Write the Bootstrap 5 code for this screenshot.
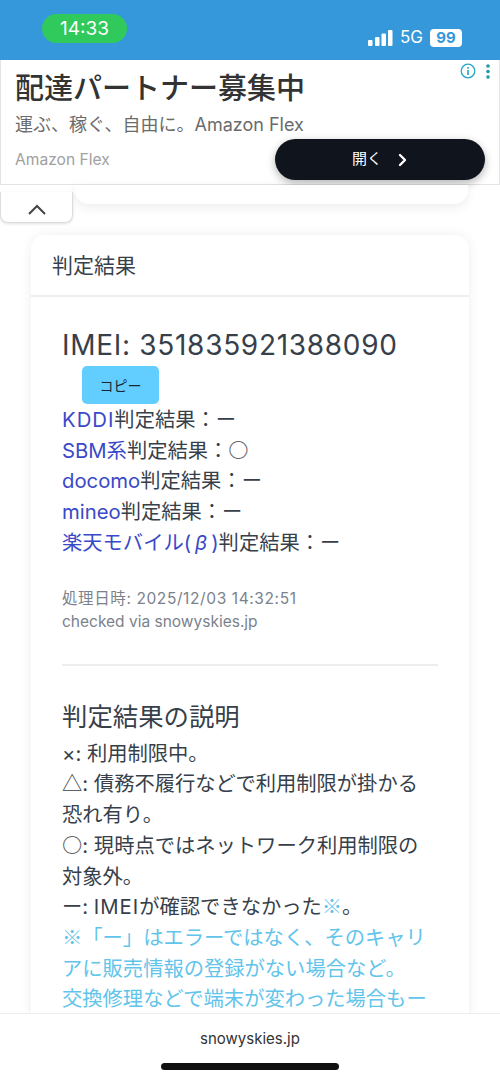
<!DOCTYPE html>
<html lang="ja">
<head>
    <meta charset="UTF-8">
    <meta name="viewport" content="width=device-width, initial-scale=1.0">
    <title>判定結果</title>
    <link href="https://cdn.jsdelivr.net/npm/bootstrap@5.3.3/dist/css/bootstrap.min.css" rel="stylesheet">
    <style>
        html, body { height: 1080px; overflow: hidden; }
        body { background: #fff; color: #373f4a; font-family: Inter, "Noto Sans CJK JP", sans-serif; position: relative; }
        .status-strip { height: 60px; background: #3498db; padding: 14px 38px 0 42px; }
        .clock-pill { width: 85px; height: 29px; border-radius: 15px; background: #30c95c; color: #fff; font-size: 19px; line-height: 29px; text-align: center; }
        .status-right { color: #fff; font-size: 17px; margin-top: 11px; gap: 7px; }
        .batt-box { width: 32px; height: 18px; border-radius: 4px; background: #fff; color: #3498db; font-size: 15px; font-weight: 700; line-height: 18px; text-align: center; }
        .ad-box { height: 125px; background: #fff; border: 1px solid #e4e4e4; border-top: 0; padding: 9px 14px 0; position: relative; }
        .ad-title { font-size: 29px; line-height: 40px; color: #333; font-weight: 500; }
        .ad-sub { font-size: 18px; line-height: 26px; color: #6b6b6b; margin-top: 3px; }
        .ad-brand { font-size: 15.6px; line-height: 20px; color: #a0a0a0; margin-top: 12px; }
        .ad-open { position: absolute; left: 274px; top: 79px; width: 210px; height: 41px; border-radius: 21px; background: #10141c; color: #fff; font-size: 15px; box-shadow: 0 3px 8px rgba(0,0,0,.3); gap: 16px; }
        .ad-marks { position: absolute; right: 9px; top: 3px; gap: 10px; }
        .scroll-area { position: relative; height: 50px; }
        .prev-card { position: absolute; left: 75px; right: 32px; top: 0; height: 19px; background: #fff; border-radius: 0 0 14px 14px; box-shadow: 0 3px 12px rgba(0,0,0,.08); }
        .fold-tab { position: absolute; left: 0; top: 7px; width: 73px; height: 31px; background: #fff; border: 1px solid #ddd; border-top: 0; border-radius: 0 0 8px 8px; text-align: center; box-shadow: 0 1px 3px rgba(0,0,0,.12); }
        .result-card { margin: 0 31px 0 31px; border: 0; border-radius: 14px; box-shadow: 0 0 12px rgba(0,0,0,.07); }
        .result-card .card-header { height: 62px; background: #fff; border-bottom: 2px solid #eee; font-size: 21px; line-height: 62px; padding: 0 21px; border-radius: 14px 14px 0 0; color: #373f4a; }
        .result-card .card-body { padding: 30px 31px; }
        .imei-line { font-size: 28px; line-height: 36px; margin: 0; letter-spacing: .7px; }
        .btn-copy { display: block; width: 77px; height: 38px; margin: 3px 0 0 20px; padding: 0; background: #62cdff; border: 0; border-radius: 5px; color: #1a2733; font-size: 14px; }
        .carrier-list { font-size: 20.3px; line-height: 30.7px; margin-top: 1px; }
        .carrier-list a { color: #3949c8; text-decoration: none; }
        .wide-latin { letter-spacing: 1px; }
        .beta-mark { font-style: italic; padding: 0 4px; }
        .thin-circle { color: #666; font-weight: 300; }
        .meta-text { font-size: 15.5px; line-height: 23.6px; color: #7b828c; margin-top: 28px; }
        .meta-date { letter-spacing: .6px; }
        .split { border-top: 2px solid #eee; margin: 30px 0 32px; opacity: 1; }
        .help-title { font-size: 25.4px; line-height: 38px; margin: 0; font-weight: 400; }
        .help-text { font-size: 20.3px; line-height: 30.7px; margin-top: 3px; }
        .note-blue { color: #62c4ea; }
        .cjk-mark { font-family: "Noto Sans CJK JP", sans-serif; line-height: 1; }
        .bottom-bar { position: absolute; left: 0; right: 0; top: 1013px; height: 67px; background: rgba(255,255,255,.97); border-top: 1px solid #eee; text-align: center; font-size: 15px; color: #333; padding-top: 14px; }
        .home-bar { position: absolute; left: 161px; top: 49px; width: 178px; height: 7px; border-radius: 4px; background: #111; }
    </style>
</head>
<body>
    <div class="status-strip d-flex justify-content-between align-items-start">
        <div class="clock-pill">14:33</div>
        <div class="status-right d-flex align-items-center">
            <svg width="25" height="16" viewBox="0 0 25 16"><rect x="0" y="10" width="4.5" height="6" rx="1" fill="#fff"/><rect x="7" y="7" width="4.5" height="9" rx="1" fill="#fff"/><rect x="13.5" y="3.5" width="4.5" height="12.500" rx="1" fill="#fff"/><rect x="20" y="0" width="4.500" height="16" rx="1" fill="#fff"/></svg>
            <span>5G</span>
            <span class="batt-box">99</span>
        </div>
    </div>

    <div class="ad-box">
        <div class="ad-title">配達パートナー募集中</div>
        <div class="ad-sub">運ぶ、稼ぐ、自由に。Amazon Flex</div>
        <div class="ad-brand">Amazon Flex</div>
        <div class="ad-open d-flex align-items-center justify-content-center">
            <span>開く</span>
            <svg width="10" height="14" viewBox="0 0 10 14"><path d="M2 2l5 5-5 5" fill="none" stroke="#fff" stroke-width="2.400" stroke-linecap="round" stroke-linejoin="round"/></svg>
        </div>
        <div class="ad-marks d-flex align-items-center">
            <svg width="16" height="16" viewBox="0 0 16 16"><circle cx="8" cy="8" r="6.800" fill="none" stroke="#25a5c4" stroke-width="1.300"/><rect x="7.200" y="7" width="1.600" height="5" fill="#25a5c4"/><rect x="7.200" y="4" width="1.600" height="1.700" fill="#25a5c4"/></svg>
            <svg width="4" height="15" viewBox="0 0 4 15"><circle cx="2" cy="2" r="1.800" fill="#1f9aa8"/><circle cx="2" cy="7.500" r="1.800" fill="#1f9aa8"/><circle cx="2" cy="13" r="1.800" fill="#1f9aa8"/></svg>
        </div>
    </div>

    <div class="scroll-area">
        <div class="prev-card"></div>
        <div class="fold-tab">
            <svg width="20" height="12" viewBox="0 0 20 12" class="mt-2"><path d="M2 10l8-8 8 8" fill="none" stroke="#444" stroke-width="2"/></svg>
        </div>
    </div>

    <div class="card result-card">
        <div class="card-header">判定結果</div>
        <div class="card-body">
            <p class="imei-line">IMEI: 351835921388090</p>
            <button class="btn btn-copy" type="button">コピー</button>
            <div class="carrier-list">
                <div><a href="#" class="wide-latin">KDDI</a>判定結果：ー</div>
                <div><a href="#">SBM系</a>判定結果：<span class="thin-circle cjk-mark">〇</span></div>
                <div><a href="#">docomo</a>判定結果：ー</div>
                <div><a href="#">mineo</a>判定結果：ー</div>
                <div><a href="#">楽天モバイル(<span class="beta-mark">β</span>)</a>判定結果：ー</div>
            </div>
            <div class="meta-text"><span class="meta-date">処理日時: 2025/12/03 14:32:51</span><br>checked via snowyskies.jp</div>
            <hr class="split">
            <h5 class="help-title">判定結果の説明</h5>
            <div class="help-text">
                ×: 利用制限中。<br>
                <span class="cjk-mark">△</span>: 債務不履行などで利用制限が掛かる<br>恐れ有り。<br>
                <span class="thin-circle cjk-mark">〇</span>: 現時点ではネットワーク利用制限の<br>対象外。<br>
                ー: <span class="wide-latin">IMEI</span>が確認できなかった<span class="note-blue cjk-mark">※</span>。<br>
                <span class="note-blue"><span class="cjk-mark">※</span>「ー」はエラーではなく、そのキャリ<br>アに販売情報の登録がない場合など。<br>交換修理などで端末が変わった場合もー</span>
            </div>
        </div>
    </div>

    <div class="bottom-bar">
        snowyskies.jp
        <div class="home-bar"></div>
    </div>

    <script src="https://cdn.jsdelivr.net/npm/bootstrap@5.3.3/dist/js/bootstrap.bundle.min.js"></script>
</body>
</html>
